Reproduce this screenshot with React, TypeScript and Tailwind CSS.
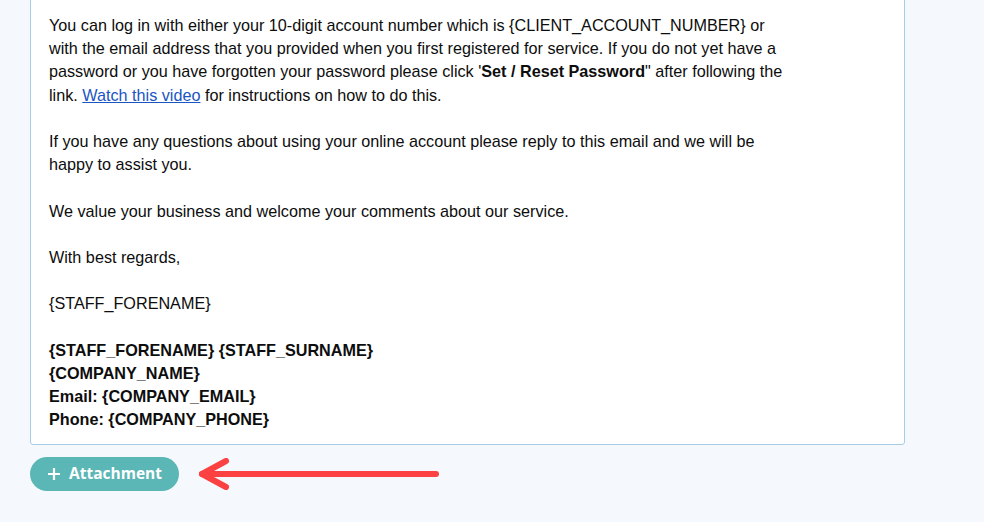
export default function App() {
  return (
    <div className="min-h-[522px] w-[984px] bg-[#f5f8fc] pl-[30px] overflow-hidden" style={{ fontFamily: '"Liberation Sans", Arial, sans-serif' }}>
      <div className="w-[875px] -mt-[12px] bg-white border border-[#a7cde6] rounded-b-[3px] pl-[18px] pr-5 pt-[25px] pb-[12px] text-[16.2px] leading-[23.2px] text-[#0d0d0d]">
        <p>
          You can log in with either your 10-digit account number which is {"{CLIENT_ACCOUNT_NUMBER}"} or
          <br />
          with the email address that you provided when you first registered for service. If you do not yet have a
          <br />
          password or you have forgotten your password please click '<b>Set / Reset Password</b>" after following the
          <br />
          link. <a className="text-[#1a55c2] underline" href="#">Watch this video</a> for instructions on how to do this.
        </p>
        <p className="mt-[23.2px]">
          If you have any questions about using your online account please reply to this email and we will be
          <br />
          happy to assist you.
        </p>
        <p className="mt-[23.2px]">We value your business and welcome your comments about our service.</p>
        <p className="mt-[23.2px]">With best regards,</p>
        <p className="mt-[23.2px]">{"{STAFF_FORENAME}"}</p>
        <p className="mt-[23.2px] font-bold">
          {"{STAFF_FORENAME} {STAFF_SURNAME}"}
          <br />
          {"{COMPANY_NAME}"}
          <br />
          Email: {"{COMPANY_EMAIL}"}
          <br />
          Phone: {"{COMPANY_PHONE}"}
        </p>
      </div>

      <div className="flex items-center mt-3 gap-5">
        <button
          className="h-[34px] w-[149px] rounded-full bg-[#5bb7b6] text-white flex items-center pl-[18px] gap-[9px] text-[15.5px] font-bold"
          style={{ fontFamily: '"Open Sans", sans-serif' }}
        >
          <svg width="12" height="12" viewBox="0 0 12 12" fill="none" stroke="white" strokeWidth="2.2">
            <path d="M6 0v12M0 6h12" />
          </svg>
          Attachment
        </button>
        <svg width="244" height="32" viewBox="0 0 244 32" fill="none" stroke="#fb4141" strokeWidth="6" strokeLinecap="round" strokeLinejoin="round" className="-ml-[1px]">
          <path d="M4 16H238" />
          <path d="M28 3L4 16L28 29" />
        </svg>
      </div>
    </div>
  );
}
